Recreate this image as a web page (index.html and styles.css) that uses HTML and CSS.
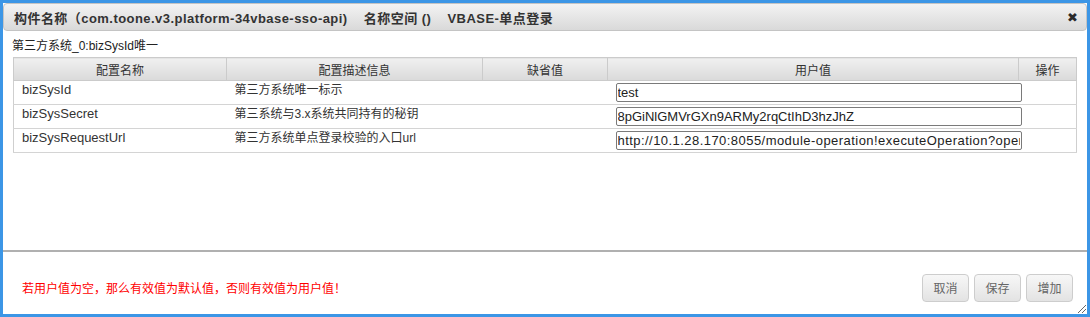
FILE: index.html
```html
<!DOCTYPE html>
<html lang="zh-CN">
<head>
    <meta charset="UTF-8">
    <title>构件配置</title>
    <link rel="stylesheet" href="styles.css">
</head>
<body>
    <div class="dialog">
        <div class="dialog-head">
            <span class="dialog-title">构件名称（com.toone.v3.platform-34vbase-sso-api)&nbsp;&nbsp;&nbsp;&nbsp;名称空间 ()&nbsp;&nbsp;&nbsp;&nbsp;VBASE-单点登录</span>
            <span class="dialog-close">&#10006;</span>
        </div>
        <div class="dialog-body">
            <div class="group-title">第三方系统_0:bizSysId唯一</div>
            <table class="grid">
                <colgroup>
                    <col style="width:213px">
                    <col style="width:256px">
                    <col style="width:125px">
                    <col style="width:411px">
                    <col style="width:58px">
                </colgroup>
                <thead>
                    <tr>
                        <th>配置名称</th>
                        <th>配置描述信息</th>
                        <th>缺省值</th>
                        <th>用户值</th>
                        <th>操作</th>
                    </tr>
                </thead>
                <tbody>
                    <tr>
                        <td>bizSysId</td>
                        <td class="desc">第三方系统唯一标示</td>
                        <td></td>
                        <td class="val"><input type="text" value="test"></td>
                        <td></td>
                    </tr>
                    <tr>
                        <td>bizSysSecret</td>
                        <td class="desc">第三系统与3.x系统共同持有的秘钥</td>
                        <td></td>
                        <td class="val"><input type="text" value="8pGiNlGMVrGXn9ARMy2rqCtIhD3hzJhZ"></td>
                        <td></td>
                    </tr>
                    <tr>
                        <td>bizSysRequestUrl</td>
                        <td class="desc">第三方系统单点登录校验的入口url</td>
                        <td></td>
                        <td class="val"><input type="text" class="url" value="http://10.1.28.170:8055/module-operation!executeOperation?operation=SSOLogin"></td>
                        <td></td>
                    </tr>
                </tbody>
            </table>
        </div>
        <div class="dialog-foot">
            <span class="tip">若用户值为空，那么有效值为默认值，否则有效值为用户值！</span>
            <div class="buttons">
                <button>取消</button>
                <button>保存</button>
                <button>增加</button>
            </div>
            <span class="grip"></span>
        </div>
    </div>
</body>
</html>
```

FILE: styles.css
```css
html, body { margin: 0; padding: 0; }
body { font-family: "Liberation Sans", "Noto Sans CJK SC", sans-serif; font-size: 12px; color: #333; background: #fff; }

.dialog { width: 1090px; height: 317px; box-sizing: border-box; border: 3px solid #3c96e6; display: flex; flex-direction: column; background: #fff; position: relative; }

.dialog-head { height: 28px; box-sizing: border-box; display: flex; align-items: center; justify-content: space-between; padding: 0 8px 0 10px; background: linear-gradient(#f3f3f3, #d9d9d9); border: 1px solid #c4c4c4; border-radius: 4px; }
.dialog-title { font-weight: bold; font-size: 13px; color: #333; white-space: pre; letter-spacing: 0.45px; }
.dialog-close { font-size: 13px; color: #2a2a2a; }

.dialog-body { flex: 1; padding: 0 11px 0 10px; }
.group-title { font-size: 12px; line-height: 14px; margin: 8px 0 4px -1px; color: #222; }

.grid { width: 1063px; table-layout: fixed; border-collapse: collapse; border: 1px solid #cfcfcf; border-top: none; }
.grid th { height: 22px; padding: 0; font-weight: normal; font-size: 12px; color: #333; background: linear-gradient(#f0f0f0, #dadada); border: 1px solid #cbcbcb; }
.grid td { height: 24px; padding: 1px 0 0 8px; font-size: 13px; line-height: 15px; vertical-align: top; box-sizing: border-box; border-bottom: 1px solid #d4d4d4; overflow: visible; white-space: nowrap; }
.grid td.desc { font-size: 12px; padding-top: 2px; }
.grid td.val { padding-top: 2px; }
.grid input { width: 406px; height: 19px; box-sizing: border-box; margin: 0; padding: 0 1px; border: 1px solid #7a7a7a; border-radius: 2px; font-family: "Liberation Sans", sans-serif; font-size: 13px; color: #222; background: #fff; }
.grid input.url { letter-spacing: 0.45px; }

.dialog-foot { height: 64px; box-sizing: border-box; border-top: 2px solid #b0b0b0; display: flex; align-items: center; justify-content: space-between; padding: 9px 14px 0 19px; }
.tip { color: #f00; font-size: 12px; }
.buttons { display: flex; gap: 5px; }
.buttons button { width: 47px; height: 28px; padding: 0; font-family: "Liberation Sans", "Noto Sans CJK SC", sans-serif; font-size: 12px; color: #666; background: linear-gradient(#f7f7f7, #e3e3e3); border: 1px solid #cdcdcd; border-radius: 4px; }
.grip { position: absolute; right: 1px; bottom: 1px; width: 10px; height: 10px; background: repeating-linear-gradient(135deg, transparent 0 2px, #666 2px 3px); clip-path: polygon(100% 0, 100% 100%, 0 100%); }
```
